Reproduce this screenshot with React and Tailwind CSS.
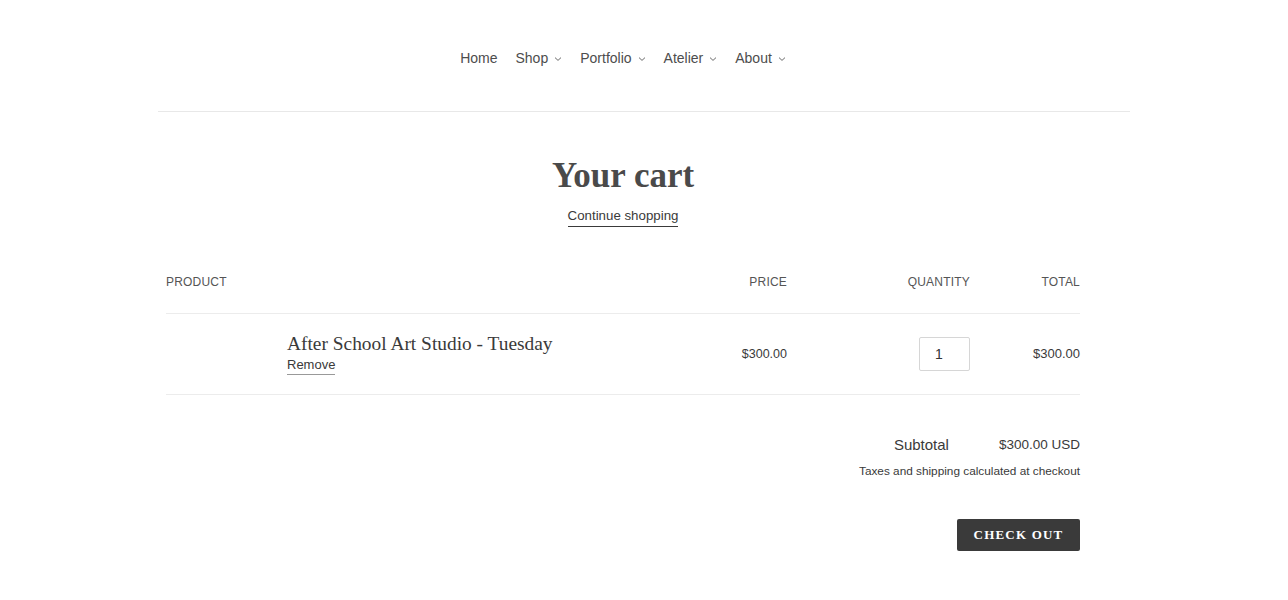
import React from "react";

const sans = { fontFamily: '"Liberation Sans", Arial, sans-serif' };
const serif = { fontFamily: '"Liberation Serif", "Times New Roman", serif' };

function Chevron() {
  return (
    <svg width="8" height="8" viewBox="0 0 8 8" className="ml-[6px] mt-[1px]" fill="none">
      <path d="M1 2.6 L4 5.4 L7 2.6" stroke="#6b6b6b" strokeWidth="1" />
    </svg>
  );
}

function NavItem({ label, dd }) {
  return (
    <div className="flex items-center px-[9px] text-[14px] text-[#4d4d4d]">
      <span>{label}</span>
      {dd && <Chevron />}
    </div>
  );
}

export default function App() {
  return (
    <div className="w-[1288px] min-h-[600px] bg-white" style={sans}>
      <div className="ml-[166px] w-[914px] flex justify-center pt-[48px] h-[111px]">
        <div className="flex h-[20px] items-center">
          <NavItem label="Home" />
          <NavItem label="Shop" dd />
          <NavItem label="Portfolio" dd />
          <NavItem label="Atelier" dd />
          <NavItem label="About" dd />
        </div>
      </div>
      <div className="ml-[158px] w-[972px] h-px bg-[#e8e8e8]" />

      <div className="ml-[166px] w-[914px]">
        <div className="flex flex-col items-center pt-[42px]">
          <h1 className="text-[35px] leading-[44px] font-bold text-[#4a4a4a]" style={serif}>
            Your cart
          </h1>
          <a className="mt-[10px] text-[13.3px] leading-[16px] text-[#3a3a3a] border-b border-[#3a3a3a] pb-[2px]">
            Continue shopping
          </a>
        </div>

        <div className="mt-[37px] flex items-center h-[36px] text-[12px] text-[#555] tracking-[0.2px]">
          <div className="flex-1">PRODUCT</div>
          <div className="w-[120px] text-right">PRICE</div>
          <div className="w-[183px] text-right">QUANTITY</div>
          <div className="w-[110px] text-right">TOTAL</div>
        </div>

        <div className="mt-[13px] border-t border-b border-[#ececec] h-[82px] flex items-center">
          <div className="flex-1 pl-[121px] flex flex-col">
            <div className="text-[19.4px] leading-[22px] text-[#3a3a3a]" style={serif}>
              After School Art Studio - Tuesday
            </div>
            <div className="mt-[2px] flex">
              <span className="text-[13px] leading-[16px] text-[#3a3a3a] border-b border-[#999] pb-[1px]">
                Remove
              </span>
            </div>
          </div>
          <div className="w-[120px] text-right text-[12.5px] text-[#3a3a3a]">$300.00</div>
          <div className="w-[183px] flex justify-end">
            <div className="w-[51px] h-[34px] border border-[#d6d6d6] rounded-[2px] flex items-center pl-[15px] text-[14px] text-[#333]">
              1
            </div>
          </div>
          <div className="w-[110px] text-right text-[13px] text-[#3a3a3a]">$300.00</div>
        </div>

        <div className="flex flex-col items-end mt-[40px]">
          <div className="flex items-center h-[20px]">
            <span className="text-[15px] text-[#3a3a3a]">Subtotal</span>
            <span className="ml-[50px] text-[13.5px] text-[#3a3a3a]">$300.00 USD</span>
          </div>
          <div className="mt-[8px] text-[11.8px] text-[#3a3a3a]">
            Taxes and shipping calculated at checkout
          </div>
          <button
            className="mt-[38px] w-[123px] h-[32px] bg-[#3a3a3a] rounded-[2px] text-white text-[13px] font-bold tracking-[1.2px] flex items-center justify-center"
            style={serif}
          >
            CHECK OUT
          </button>
        </div>
      </div>
    </div>
  );
}
